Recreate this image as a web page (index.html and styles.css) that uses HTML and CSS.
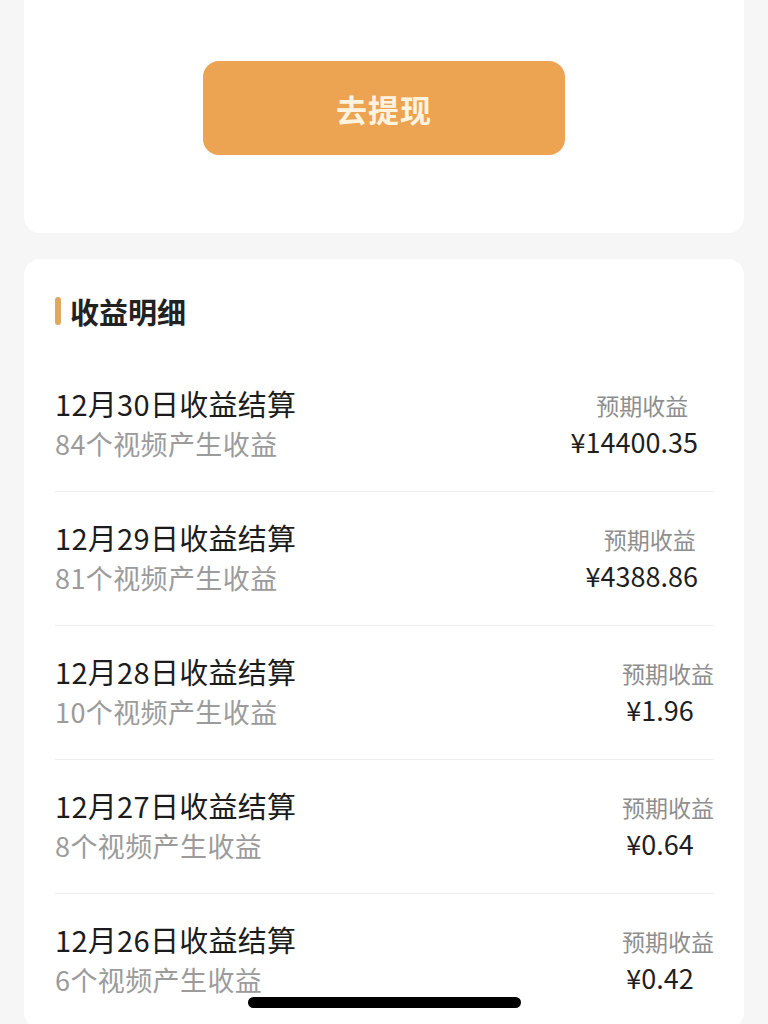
FILE: index.html
```html
<!DOCTYPE html>
<html lang="zh-CN">
<head>
<meta charset="utf-8">
<title>收益明细</title>
<link rel="stylesheet" href="styles.css">
</head>
<body>
<div class="page">
  <section class="card card-top">
    <button class="withdraw">去提现</button>
  </section>
  <section class="card card-list">
    <h2 class="section-title"><span class="bar"></span>收益明细</h2>
    <div class="row">
      <div class="left"><div class="title">12月30日收益结算</div><div class="sub">84个视频产生收益</div></div>
      <div class="right"><div class="label">预期收益</div><div class="amount">¥14400.35</div></div>
    </div>
    <div class="row">
      <div class="left"><div class="title">12月29日收益结算</div><div class="sub">81个视频产生收益</div></div>
      <div class="right"><div class="label">预期收益</div><div class="amount">¥4388.86</div></div>
    </div>
    <div class="row">
      <div class="left"><div class="title">12月28日收益结算</div><div class="sub">10个视频产生收益</div></div>
      <div class="right"><div class="label">预期收益</div><div class="amount">¥1.96</div></div>
    </div>
    <div class="row">
      <div class="left"><div class="title">12月27日收益结算</div><div class="sub">8个视频产生收益</div></div>
      <div class="right"><div class="label">预期收益</div><div class="amount">¥0.64</div></div>
    </div>
    <div class="row">
      <div class="left"><div class="title">12月26日收益结算</div><div class="sub">6个视频产生收益</div></div>
      <div class="right"><div class="label">预期收益</div><div class="amount">¥0.42</div></div>
    </div>
  </section>
</div>
<div class="home-indicator"></div>
</body>
</html>
```
FILE: styles.css
```css
html, body {
  margin: 0;
  padding: 0;
  background: #f6f6f6;
  font-family: "Noto Sans CJK SC", "Noto Sans", sans-serif;
  overflow: hidden;
  height: 1024px;
}
.page {
  padding: 0 24px;
  display: flex;
  flex-direction: column;
  gap: 26px;
}
.card {
  background: #ffffff;
  border-radius: 16px;
}
.card-top {
  border-radius: 0 0 16px 16px;
  padding: 61px 0 78px;
  display: flex;
  justify-content: center;
}
.withdraw {
  width: 362px;
  height: 94px;
  border: none;
  border-radius: 16px;
  background: #eca352;
  color: #fdf3df;
  font-family: inherit;
  font-size: 31px;
  font-weight: 700;
  letter-spacing: 1px;
}
.card-list {
  padding: 32px 30px 0 31px;
}
.section-title {
  margin: 0 0 27px;
  height: 40px;
  display: flex;
  align-items: center;
  gap: 9px;
  font-size: 29px;
  font-weight: 700;
  color: #222;
}
.bar {
  width: 6px;
  height: 28px;
  border-radius: 3px;
  background: #e0a75f;
}
.row {
  height: 134px;
  box-sizing: border-box;
  padding-top: 25px;
  border-bottom: 1px solid #eeeeee;
  display: flex;
  justify-content: space-between;
  align-items: flex-start;
}
.title {
  font-size: 29px;
  line-height: 40px;
  color: #1c1c1c;
  letter-spacing: 0.3px;
}
.sub {
  font-size: 27px;
  line-height: 42px;
  color: #9b9b9b;
  letter-spacing: 0.4px;
}
.right {
  display: flex;
  flex-direction: column;
  align-items: center;
  text-align: center;
}
.label {
  font-size: 23px;
  line-height: 44px;
  color: #8e8e8e;
}
.amount {
  font-size: 27px;
  line-height: 30px;
  color: #1f1f1f;
  padding-right: 16px;
}
.home-indicator {
  position: fixed;
  left: 248px;
  top: 997px;
  width: 273px;
  height: 11px;
  border-radius: 6px;
  background: #000;
}
```
